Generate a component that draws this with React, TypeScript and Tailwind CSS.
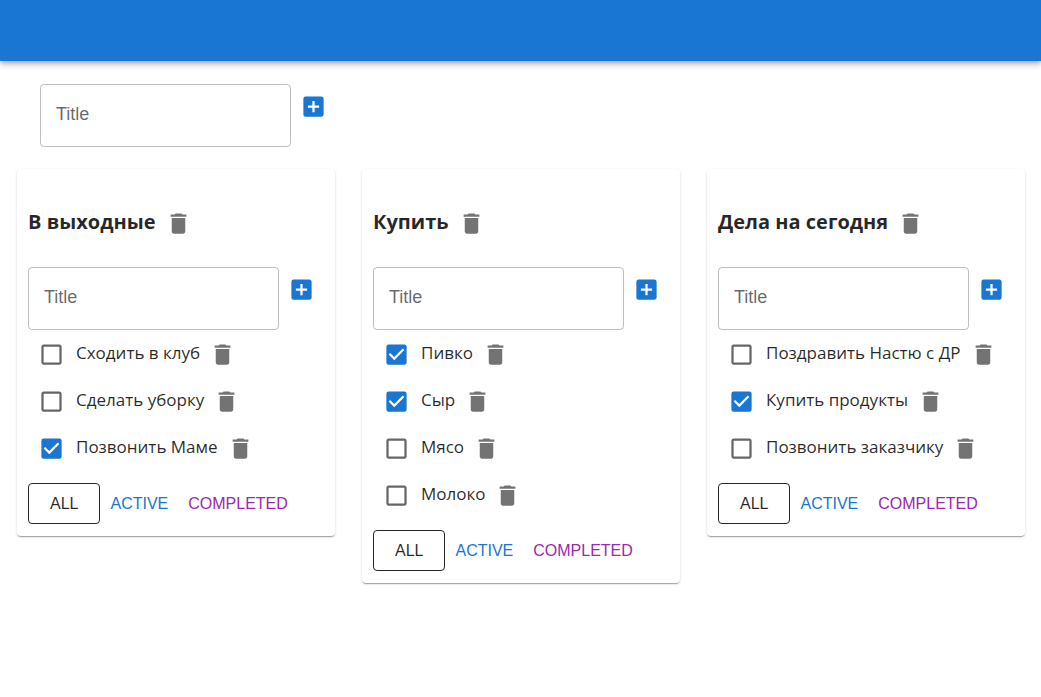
import { useId, useState } from "react";
import {
  MdAddBox,
  MdCheckBox,
  MdCheckBoxOutlineBlank,
  MdDelete,
} from "react-icons/md";

type Filter = "all" | "active" | "completed";

interface Task {
  id: number;
  title: string;
  isDone: boolean;
}

interface TodoListData {
  id: number;
  title: string;
  tasks: Task[];
}

const initialLists: TodoListData[] = [
  {
    id: 1,
    title: "В выходные",
    tasks: [
      { id: 1, title: "Сходить в клуб", isDone: false },
      { id: 2, title: "Сделать уборку", isDone: false },
      { id: 3, title: "Позвонить Маме", isDone: true },
    ],
  },
  {
    id: 2,
    title: "Купить",
    tasks: [
      { id: 1, title: "Пивко", isDone: true },
      { id: 2, title: "Сыр", isDone: true },
      { id: 3, title: "Мясо", isDone: false },
      { id: 4, title: "Молоко", isDone: false },
    ],
  },
  {
    id: 3,
    title: "Дела на сегодня",
    tasks: [
      { id: 1, title: "Поздравить Настю с ДР", isDone: false },
      { id: 2, title: "Купить продукты", isDone: true },
      { id: 3, title: "Позвонить заказчику", isDone: false },
    ],
  },
];

const AddItemForm = ({ onAdd }: { onAdd: (title: string) => void }) => {
  const id = useId();
  const [title, setTitle] = useState("");

  const add = () => {
    if (title.trim() === "") return;
    onAdd(title.trim());
    setTitle("");
  };

  return (
    <div className="flex items-start">
      <div className="relative flex w-[251px] font-['Liberation_Sans',sans-serif] text-lg">
        <input
          id={id}
          type="text"
          value={title}
          onChange={(e) => setTitle(e.target.value)}
          onKeyDown={(e) => e.key === "Enter" && add()}
          className="h-[63px] w-full rounded border border-black/25 px-[15px] outline-none focus:border-[#1976d2]"
        />
        {/* the label lies in the empty field and gives way to typed text */}
        {title === "" && (
          <label
            htmlFor={id}
            className="pointer-events-none absolute top-4 left-4 text-black/60"
          >
            Title
          </label>
        )}
      </div>
      <button
        type="button"
        aria-label="Add"
        onClick={add}
        className="shrink-0 rounded-full p-[9px] text-[#1976d2]"
      >
        <MdAddBox size={27} />
      </button>
    </div>
  );
};

const DeleteButton = ({ onClick }: { onClick: () => void }) => {
  return (
    <button
      type="button"
      aria-label="Delete"
      onClick={onClick}
      className="shrink-0 rounded-full p-[9px] text-black/55 hover:bg-black/5"
    >
      <MdDelete size={27} />
    </button>
  );
};

interface TaskItemProps {
  task: Task;
  onToggle: () => void;
  onRemove: () => void;
}

const TaskItem = ({ task, onToggle, onRemove }: TaskItemProps) => {
  return (
    <li className="flex h-[47px] items-center">
      <label className="flex items-center gap-[2px]">
        <span className="relative p-[9px]">
          <input
            type="checkbox"
            checked={task.isDone}
            onChange={onToggle}
            className="absolute inset-0 size-full cursor-pointer opacity-0"
          />
          {task.isDone ? (
            <MdCheckBox size={27} className="text-[#1976d2]" />
          ) : (
            <MdCheckBoxOutlineBlank size={27} className="text-black/60" />
          )}
        </span>
        <span className="pb-1 text-[17px]">{task.title}</span>
      </label>
      <DeleteButton onClick={onRemove} />
    </li>
  );
};

interface TodoListProps {
  list: TodoListData;
  onChange: (tasks: Task[]) => void;
  onRemove: () => void;
}

const filters: { value: Filter; title: string; color: string }[] = [
  { value: "all", title: "ALL", color: "text-black/85" },
  { value: "active", title: "ACTIVE", color: "text-[#1976d2]" },
  { value: "completed", title: "COMPLETED", color: "text-[#9c27b0]" },
];

const TodoList = ({ list, onChange, onRemove }: TodoListProps) => {
  const [filter, setFilter] = useState<Filter>("all");

  const tasks = list.tasks.filter(
    (t) => filter === "all" || t.isDone === (filter === "completed"),
  );

  return (
    <section className="rounded bg-white p-[11px] pb-3 shadow-[0_2px_1px_-1px_rgba(0,0,0,0.2),0_1px_1px_0_rgba(0,0,0,0.14),0_1px_3px_0_rgba(0,0,0,0.12)]">
      <div className="my-[21px] flex items-center">
        <h3 className="pb-1 text-xl font-bold">{list.title}</h3>
        <DeleteButton onClick={onRemove} />
      </div>
      <AddItemForm
        onAdd={(title) =>
          onChange([{ id: Date.now(), title, isDone: false }, ...list.tasks])
        }
      />
      <ul className="pt-px pl-px">
        {tasks.map((task) => (
          <TaskItem
            key={task.id}
            task={task}
            onToggle={() =>
              onChange(
                list.tasks.map((t) =>
                  t.id === task.id ? { ...t, isDone: !t.isDone } : t,
                ),
              )
            }
            onRemove={() =>
              onChange(list.tasks.filter((t) => t.id !== task.id))
            }
          />
        ))}
      </ul>
      <div className="mt-[11px] flex font-['Liberation_Sans',sans-serif]">
        {filters.map((f) => (
          <button
            key={f.value}
            type="button"
            onClick={() => setFilter(f.value)}
            className={`h-[41px] rounded ${f.color} ${
              filter === f.value
                ? "border border-black/85 px-[21px]"
                : "px-[10px]"
            }`}
          >
            {f.title}
          </button>
        ))}
      </div>
    </section>
  );
};

export default function App() {
  const [lists, setLists] = useState(initialLists);

  return (
    <div className="min-h-screen bg-white font-['Open_Sans','Noto_Sans',sans-serif] text-black/85">
      <header className="h-[61px] bg-[#1976d2] shadow-[0_2px_4px_-1px_rgba(0,0,0,0.2),0_4px_5px_0_rgba(0,0,0,0.14),0_1px_10px_0_rgba(0,0,0,0.12)]" />
      <main className="pr-4 pl-[17px]">
        <div className="px-[23px] pt-[23px] pb-[22px]">
          <AddItemForm
            onAdd={(title) =>
              setLists([{ id: Date.now(), title, tasks: [] }, ...lists])
            }
          />
        </div>
        <div className="grid grid-cols-3 items-start gap-[27px]">
          {lists.map((list) => (
            <TodoList
              key={list.id}
              list={list}
              onChange={(tasks) =>
                setLists(
                  lists.map((l) => (l.id === list.id ? { ...l, tasks } : l)),
                )
              }
              onRemove={() => setLists(lists.filter((l) => l.id !== list.id))}
            />
          ))}
        </div>
      </main>
    </div>
  );
}
